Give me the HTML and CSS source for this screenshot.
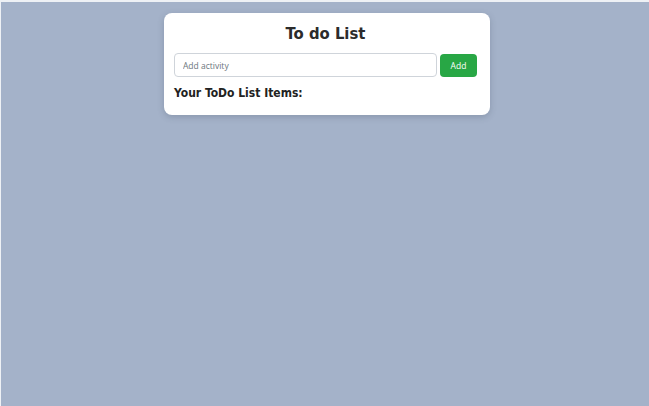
FILE: index.html
```html
<!DOCTYPE html>
<html>
<head>
<meta charset="utf-8">
<title>To do List</title>
<link rel="stylesheet" href="styles.css">
</head>
<body>
<div class="page">
  <div class="card">
    <h1 class="title">To do List</h1>
    <div class="form-row">
      <input class="task-input" type="text" placeholder="Add activity">
      <button class="add-btn">Add</button>
    </div>
    <h2 class="list-heading">Your ToDo List Items:</h2>
  </div>
</div>
</body>
</html>
```
FILE: styles.css
```css
html, body {
  margin: 0;
  padding: 0;
  height: 100%;
}
body {
  background: #eef1f5;
  font-family: "DejaVu Sans Condensed", "DejaVu Sans", Verdana, sans-serif;
  font-stretch: condensed;
}
.page {
  box-sizing: border-box;
  height: 100%;
  margin-top: 2px;
  margin-left: 1px;
  background: #a4b2c9;
  display: flex;
  flex-direction: column;
  align-items: center;
  padding-top: 11px;
  padding-left: 4px;
}
.card {
  box-sizing: border-box;
  width: 326px;
  background: #ffffff;
  border-radius: 8px;
  box-shadow: 0 2px 6px rgba(60, 70, 90, 0.25);
  padding: 10px 13px 14px 10px;
}
.title {
  margin: 0 0 8px 0;
  text-align: center;
  font-size: 16.5px;
  font-weight: bold;
  color: #2b2b2b;
  line-height: 22px;
}
.form-row {
  display: flex;
  align-items: center;
  gap: 3px;
}
.task-input {
  box-sizing: border-box;
  flex: 1;
  height: 24px;
  border: 1px solid #cfd4da;
  border-radius: 4px;
  padding: 0 8px;
  font-family: "Open Sans", "Noto Sans", sans-serif;
  font-stretch: normal;
  font-size: 8.5px;
  color: #333;
  outline: none;
}
.task-input::placeholder {
  color: #6c757d;
}
.add-btn {
  box-sizing: border-box;
  width: 37px;
  height: 23px;
  border: none;
  border-radius: 4px;
  background: #28a745;
  color: #ffffff;
  font-family: "Open Sans", "Noto Sans", sans-serif;
  font-stretch: normal;
  font-size: 8.5px;
  padding: 0;
}
.list-heading {
  margin: 8px 0 0 0;
  font-size: 12px;
  font-weight: bold;
  color: #222;
  line-height: 16px;
}
```
